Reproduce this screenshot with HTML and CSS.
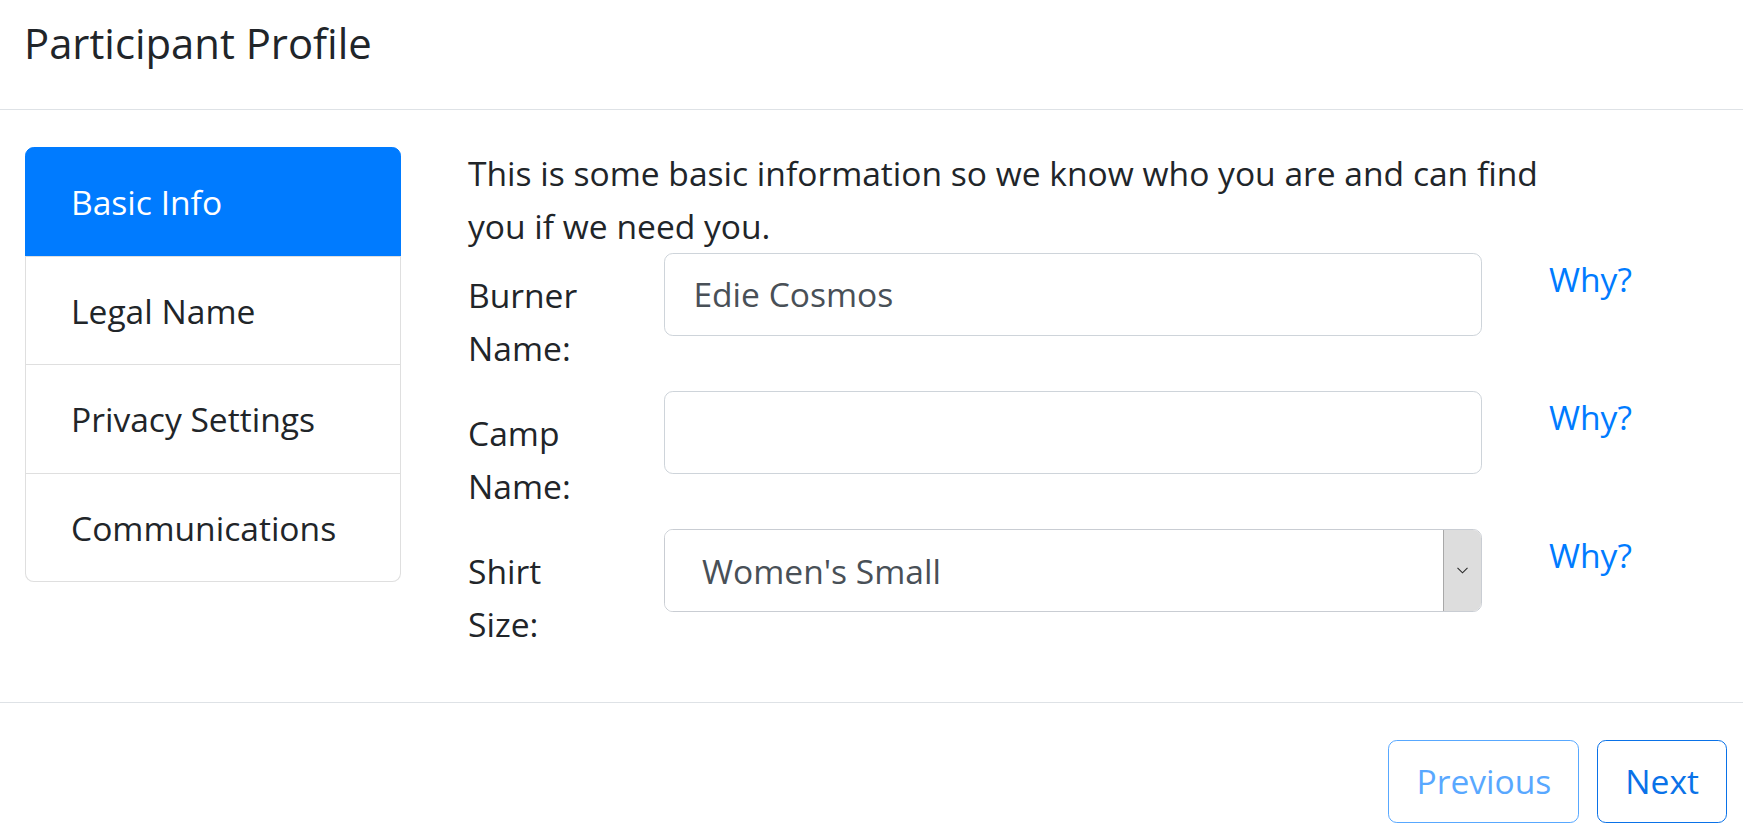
FILE: index.html
```html
<!DOCTYPE html>
<html lang="en">
<head>
<meta charset="utf-8">
<title>Participant Profile</title>
<link rel="stylesheet" href="styles.css">
</head>
<body>
<div class="modal">
  <header class="modal-header">
    <h5 class="modal-title">Participant Profile</h5>
  </header>
  <main class="modal-body">
    <nav class="list-group">
      <a class="list-item active">Basic Info</a>
      <a class="list-item">Legal Name</a>
      <a class="list-item">Privacy Settings</a>
      <a class="list-item">Communications</a>
    </nav>
    <section class="content">
      <p class="intro">This is some basic information so we know who you are and can find you if we need you.</p>
      <form class="form">
        <div class="form-row">
          <label class="form-label" for="burner">Burner Name:</label>
          <input class="form-control" id="burner" type="text" value="Edie Cosmos">
          <a class="why">Why?</a>
        </div>
        <div class="form-row">
          <label class="form-label" for="camp">Camp Name:</label>
          <input class="form-control" id="camp" type="text" value="">
          <a class="why">Why?</a>
        </div>
        <div class="form-row">
          <label class="form-label" for="shirt">Shirt Size:</label>
          <div class="select-wrap">
            <select class="select" id="shirt">
              <option>Women's Small</option>
            </select>
            <span class="select-btn">
              <svg width="11" height="7" viewBox="0 0 11 7"><path d="M0.5 0.8 L5.5 5.8 L10.5 0.8" fill="none" stroke="#2b2b2b" stroke-width="1.1"/></svg>
            </span>
          </div>
          <a class="why">Why?</a>
        </div>
      </form>
    </section>
  </main>
  <footer class="modal-footer">
    <button class="btn btn-prev" disabled>Previous</button>
    <button class="btn btn-next">Next</button>
  </footer>
</div>
</body>
</html>
```

FILE: styles.css
```css
* {
  box-sizing: border-box;
}

html, body {
  margin: 0;
  padding: 0;
  background: #ffffff;
}

body {
  font-family: "Open Sans", "Noto Sans", sans-serif;
  font-size: 33.6px;
  line-height: 52.8px;
  color: #212529;
}

.modal-header {
  height: 110px;
  padding: 13px 0 0 24px;
  border-bottom: 1px solid #dee2e6;
}

.modal-title {
  margin: 0;
  font-size: 41.8px;
  font-weight: 400;
  line-height: 60px;
}

.modal-body {
  display: flex;
  align-items: flex-start;
  gap: 67px;
  padding: 37px 0 35.5px 25px;
}

.list-group {
  display: flex;
  flex-direction: column;
  width: 376px;
  flex: none;
}

.list-item {
  display: block;
  padding: 28px 20px 27px 45px;
  line-height: 52.5px;
  border: 1px solid rgba(0, 0, 0, 0.125);
  color: #212529;
  background: #ffffff;
}

.list-item + .list-item {
  margin-top: -1px;
}

.list-item:first-child {
  border-radius: 8.8px 8.8px 0 0;
}

.list-item:last-child {
  border-radius: 0 0 8.8px 8.8px;
}

.list-item.active {
  background: #007bff;
  border-color: #007bff;
  color: #ffffff;
}

.content {
  padding-top: 0;
  flex: 1;
}

.intro {
  margin: 0;
  max-width: 1100px;
}

.form-row {
  display: flex;
  align-items: flex-start;
}

.form-label {
  width: 130px;
  flex: none;
  margin-right: 66px;
  padding: 16.5px 0 16px;
}

.form-control {
  width: 818px;
  height: 83.5px;
  flex: none;
  padding: 0 26.4px 0 28.4px;
  border: 1px solid #ced4da;
  border-radius: 8.8px;
  font-family: inherit;
  font-size: 33.6px;
  color: #495057;
  background: #ffffff;
  outline: none;
}

.select-wrap {
  display: flex;
  width: 818px;
  height: 83.5px;
  flex: none;
  border: 1px solid #c9cdd3;
  border-radius: 8.8px;
  overflow: hidden;
  background: #ffffff;
}

.select {
  flex: 1;
  min-width: 0;
  -webkit-appearance: none;
  appearance: none;
  border: 0;
  padding: 0 0 0 37px;
  font-family: inherit;
  font-size: 33.6px;
  color: #495057;
  background: #ffffff;
  outline: none;
}

.select-btn {
  display: flex;
  align-items: center;
  justify-content: center;
  width: 38px;
  flex: none;
  background: #dddddd;
  border-left: 1px solid #a8a8a8;
}

.why {
  margin-left: 67px;
  color: #007bff;
  text-decoration: none;
}

.modal-footer {
  display: flex;
  justify-content: flex-end;
  gap: 18px;
  padding: 37px 16px 10px 0;
  border-top: 1px solid #dee2e6;
}

.btn {
  height: 83px;
  padding: 0 27px;
  font-family: inherit;
  font-size: 33.6px;
  line-height: 52.8px;
  background: #ffffff;
  border: 1px solid #007bff;
  border-radius: 8.8px;
  color: #007bff;
}

.btn-next {
  border-color: #0a72e8;
  color: #0a72e8;
}

.btn-prev {
  opacity: 0.65;
}
```
